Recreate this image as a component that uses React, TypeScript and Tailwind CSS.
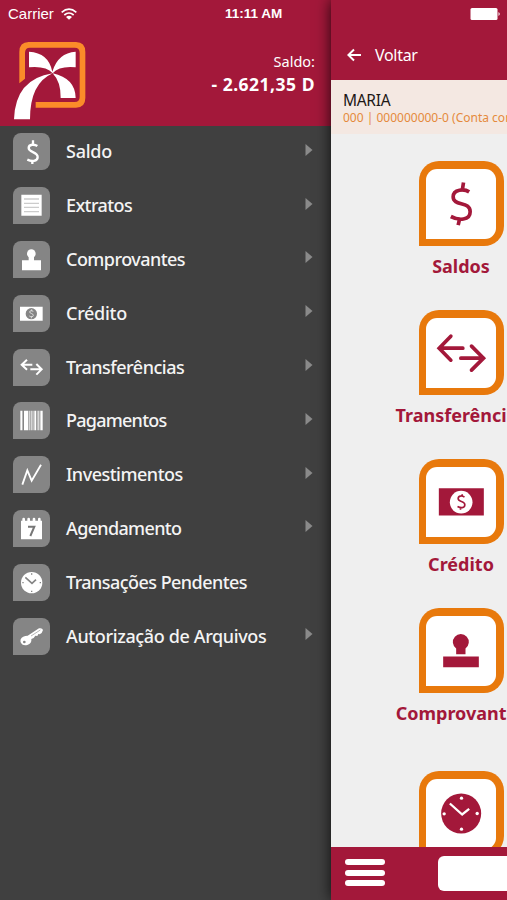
import type { ReactNode } from "react";

type IconName =
  | "dollar"
  | "list"
  | "stamp"
  | "money"
  | "transfer"
  | "barcode"
  | "chart"
  | "calendar"
  | "clock"
  | "key";

const menu: { label: string; icon: IconName; tracking: string; arrow: boolean }[] = [
  { label: "Saldo", icon: "dollar", tracking: "tracking-[-0.25px]", arrow: true },
  { label: "Extratos", icon: "list", tracking: "tracking-[-0.6px]", arrow: true },
  { label: "Comprovantes", icon: "stamp", tracking: "tracking-[-0.55px]", arrow: true },
  { label: "Crédito", icon: "money", tracking: "tracking-[-0.3px]", arrow: true },
  { label: "Transferências", icon: "transfer", tracking: "tracking-[-0.5px]", arrow: true },
  { label: "Pagamentos", icon: "barcode", tracking: "tracking-[-0.75px]", arrow: true },
  { label: "Investimentos", icon: "chart", tracking: "tracking-[-0.5px]", arrow: true },
  { label: "Agendamento", icon: "calendar", tracking: "tracking-[-0.65px]", arrow: true },
  { label: "Transações Pendentes", icon: "clock", tracking: "tracking-[-0.55px]", arrow: false },
  { label: "Autorização de Arquivos", icon: "key", tracking: "tracking-[-0.37px]", arrow: true },
];

// Small white glyphs, drawn on a 111x111 grid
const glyphs: Record<IconName, ReactNode> = {
  dollar: (
    <g fill="none" stroke="#fff" strokeWidth="7">
      <path d="M73 39C66 34 47 32 47 45C47 59 74 56 74 72C74 86 55 86 43 80" />
      <path d="M60 22V36M58 82V93" />
    </g>
  ),
  list: (
    <g>
      <path d="M25 23H86V86H25Z" fill="#fff" />
      <path d="M33 36H78M33 49H78M33 61H78M33 74H78" stroke="#ccc" strokeWidth="4" />
    </g>
  ),
  stamp: (
    <g fill="#fff">
      <circle cx="55" cy="38" r="13" />
      <path d="M47 46H63V58H84V88H27V58H47Z" />
    </g>
  ),
  money: (
    <g>
      <path d="M21 35H89V77H21Z" fill="#fff" />
      <circle cx="55" cy="56" r="17" fill="#858585" />
      <path d="M61 49C55 46 50 47 50 51C50 56 61 55 61 61C61 66 54 66 49 63M56 43V48M55 65V70" fill="none" stroke="#ddd" strokeWidth="3" />
    </g>
  ),
  transfer: (
    <path d="M58 47H26M42 32L26 47L42 62M52 61H86M70 45L86 61L70 77" fill="none" stroke="#fff" strokeWidth="6" />
  ),
  barcode: (
    <g fill="#fff">
      <path d="M22 26H27V85H22ZM33 26H46V85H33ZM53 26H56V85H53ZM64 26H69V85H64ZM76 26H79V85H76ZM82 26H89V85H82Z" />
      <path d="M28 26H30V85H28ZM48 26H51V85H48ZM58 26H62V85H58ZM71 26H74V85H71Z" opacity=".65" />
    </g>
  ),
  chart: <path d="M28 86L43 43L56 74L84 26" fill="none" stroke="#fff" strokeWidth="5.5" />,
  calendar: (
    <g>
      <path d="M24 32H87V88H24Z" fill="#fff" />
      <path d="M32 27V40M47 27V40M63 27V40M79 27V40" stroke="#fff" strokeWidth="8" strokeLinecap="round" />
      <path d="M45 50H64L52 78" fill="none" stroke="#777" strokeWidth="6" />
    </g>
  ),
  clock: (
    <g>
      <circle cx="56" cy="56" r="32" fill="#fff" />
      <path d="M37 40L57 58L69 47" fill="none" stroke="#858585" strokeWidth="5" />
      <path d="M56 28V32M56 80V84M28 56H32M80 56H84" stroke="#858585" strokeWidth="4" />
    </g>
  ),
  key: (
    <g>
      <path d="M23 64Q28 53 44 53L78 31Q88 29 90 36L86 45L80 49L76 48L73 54L67 53L62 60L55 63Q57 76 43 81Q29 84 24 75Q21 70 23 64Z" fill="#fff" />
      <circle cx="34" cy="72" r="4" fill="#858585" />
      <path d="M54 54L82 36" stroke="#aaa" strokeWidth="2.5" />
    </g>
  ),
};

// Large crimson glyphs, drawn on a 255x255 grid
const tileGlyphs = {
  dollar: (
    <g fill="none" stroke="#a3183a" strokeWidth="11">
      <path d="M152 91C138 82 104 82 104 106C104 135 155 118 155 151C155 178 120 177 97 165" />
      <path d="M135 63L131 89M119 191L124 169" />
    </g>
  ),
  transfer: (
    <path d="M133 113H63M97 77L62 113L97 149M127 143H195M159 107L195 143L159 179" fill="none" stroke="#a3183a" strokeWidth="11" strokeLinecap="round" />
  ),
  money: (
    <g>
      <path d="M61 86H196V168H61Z" fill="#a3183a" />
      <circle cx="128" cy="128" r="34" fill="#fff" />
      <path d="M138 113C131 108 119 108 119 117C119 129 139 123 139 136C139 147 126 146 117 141M131 104V111M126 144V151" fill="none" stroke="#a3183a" strokeWidth="5" />
    </g>
  ),
  stamp: (
    <g fill="#a3183a">
      <path d="M113 137V120A24 24 0 1 1 141 120V137Z" />
      <path d="M74 144H181V176H74Z" />
    </g>
  ),
  clock: (
    <g>
      <circle cx="128" cy="126" r="60" fill="#a3183a" />
      <path d="M94 96L131 129L152 112" fill="none" stroke="#fff" strokeWidth="7" />
      <g fill="#fff">
        <circle cx="129" cy="80" r="5" />
        <circle cx="129" cy="173" r="5" />
        <circle cx="77" cy="127" r="5" />
        <circle cx="176" cy="126" r="5" />
      </g>
    </g>
  ),
};

const tiles: { label: string; icon: keyof typeof tileGlyphs; height: string }[] = [
  { label: "Saldos", icon: "dollar", height: "h-[149px]" },
  { label: "Transferências", icon: "transfer", height: "h-[149px]" },
  { label: "Crédito", icon: "money", height: "h-[149px]" },
  { label: "Comprovantes", icon: "stamp", height: "h-[163px]" },
  { label: "Agendamento", icon: "clock", height: "h-[149px]" },
];

function Logo() {
  return (
    <svg viewBox="0 0 216 234" className="h-[78px] w-[72px]">
      <path
        d="M16 124V30Q16 0 44 0H186Q214 0 214 30V168Q214 197 186 197H65V180H182Q197 180 197 165V33Q197 17 182 17H48Q33 17 33 33V110Z"
        fill="#fb8c29"
      />
      <g fill="#fff">
        <path d="M45 29Q104 32 115 89Q132 32 185 29V76Q136 71 116 94Q96 71 45 76Z" />
        <path d="M116 94Q184 109 185 168H140Q141 120 116 94Z" />
        <path d="M116 94Q48 124 48 232H0Q4 111 116 94Z" />
      </g>
    </svg>
  );
}

function MenuPanel() {
  return (
    <aside className="flex w-[331px] shrink-0 flex-col bg-[#404040]">
      <header className="h-[126px] bg-[#a3183a] text-white">
        <div className="flex h-7 items-center pl-2 font-['Liberation_Sans',sans-serif] text-[15px]">
          <span className="w-[53px]">Carrier</span>
          <svg viewBox="0 0 48 36" className="h-3 w-4" fill="none" stroke="#fff" strokeWidth="5">
            <path d="M2 13Q24 -6 46 13M10 21Q24 9 38 21" />
            <path d="M15 27Q24 20 33 27L24 35Z" fill="#fff" stroke="none" />
          </svg>
          <span className="ml-[148px] text-[13.5px] font-bold whitespace-nowrap">11:11 AM</span>
        </div>
        <div className="flex justify-between pt-[14px] pr-4 pl-[14px]">
          <Logo />
          <div className="pt-[9px] text-right">
            <p className="text-[14.5px] leading-5">Saldo:</p>
            <p className="mt-px text-[17.5px] leading-6 font-bold tracking-[0.5px]">- 2.621,35 D</p>
          </div>
        </div>
      </header>
      <nav className="-mt-px">
        {menu.map((item) => (
          <div key={item.label} className="flex h-[53.8px] items-center pr-[18px] pl-[13px] text-[#f4f4f4]">
            <svg viewBox="0 0 111 111" className="h-[37px] w-[37px] rounded-lg rounded-bl-none bg-[#858585]">
              {glyphs[item.icon]}
            </svg>
            <span className={`mb-px ml-4 flex-1 text-[18px] leading-6 font-medium whitespace-nowrap ${item.tracking}`}>
              {item.label}
            </span>
            {item.arrow && (
              <svg viewBox="0 0 8 12" className="mb-1 h-3 w-2" fill="#8a8a8a">
                <path d="M0.5 0L7.5 6L0.5 12Z" />
              </svg>
            )}
          </div>
        ))}
      </nav>
    </aside>
  );
}

function AccountPanel() {
  return (
    <main className="relative flex w-44 shrink-0 flex-col overflow-hidden bg-[#efefef] shadow-[0_0_14px_rgba(0,0,0,0.8)]">
      <header className="h-20 shrink-0 bg-[#a3183a] text-white">
        <div className="flex h-7 items-center justify-end pr-[6px]">
          <svg viewBox="0 0 31 12" className="h-3 w-[31px]" fill="#fff">
            <rect x="0.5" y="0" width="27" height="12" rx="1.5" />
            <path d="M28.5 4Q31 6 28.5 8Z" />
          </svg>
        </div>
        <div className="flex h-[54px] items-center pl-4">
          <svg viewBox="0 0 14 14" className="h-[14px] w-[14px]" fill="none" stroke="#fff" strokeWidth="2">
            <path d="M14 7H1.4M7 1.5L1.4 7L7 12.5" />
          </svg>
          <span className="ml-[14px] text-[16px] tracking-[-0.3px]">Voltar</span>
        </div>
      </header>
      <section className="h-[54px] shrink-0 bg-[#f4e8e2] pt-[10px] pl-3 whitespace-nowrap">
        <p className="text-[15.5px] leading-5 tracking-[-0.3px] text-[#1d1715]">MARIA</p>
        <p className="text-[12px] leading-[15px] text-[#e58a3c]">000 | 000000000-0 (Conta corrente)</p>
      </section>
      <div className="min-h-0 w-[260px] flex-1 overflow-hidden pt-[27px]">
        {tiles.map((tile) => (
          <div key={tile.label} className={`flex flex-col items-center ${tile.height}`}>
            <div className="h-[85px] w-[85px] shrink-0 rounded-[20px] rounded-bl-none bg-[#e8790c] p-[7.5px]">
              <div className="h-full w-full rounded-[11px] rounded-bl-none bg-white">
                <svg viewBox="22.5 22.5 210 210" className="h-[70px] w-[70px]">
                  {tileGlyphs[tile.icon]}
                </svg>
              </div>
            </div>
            <span className="mt-2 text-[18px] leading-6 font-bold text-[#a3183a]">{tile.label}</span>
          </div>
        ))}
      </div>
      <footer className="flex h-[53px] shrink-0 bg-[#a3183a] pl-[14px]">
        <div className="mt-3 flex w-10 shrink-0 flex-col gap-[4.5px]">
          <span className="h-[6px] rounded-full bg-white" />
          <span className="h-[6px] rounded-full bg-white" />
          <span className="h-[6px] rounded-full bg-white" />
        </div>
        <div className="mt-[9px] ml-[53px] h-[35px] w-[120px] shrink-0 rounded-md bg-white" />
      </footer>
    </main>
  );
}

export default function App() {
  return (
    <div className="flex h-[900px] w-[507px] overflow-hidden font-['Noto_Sans',sans-serif]">
      <MenuPanel />
      <AccountPanel />
    </div>
  );
}
